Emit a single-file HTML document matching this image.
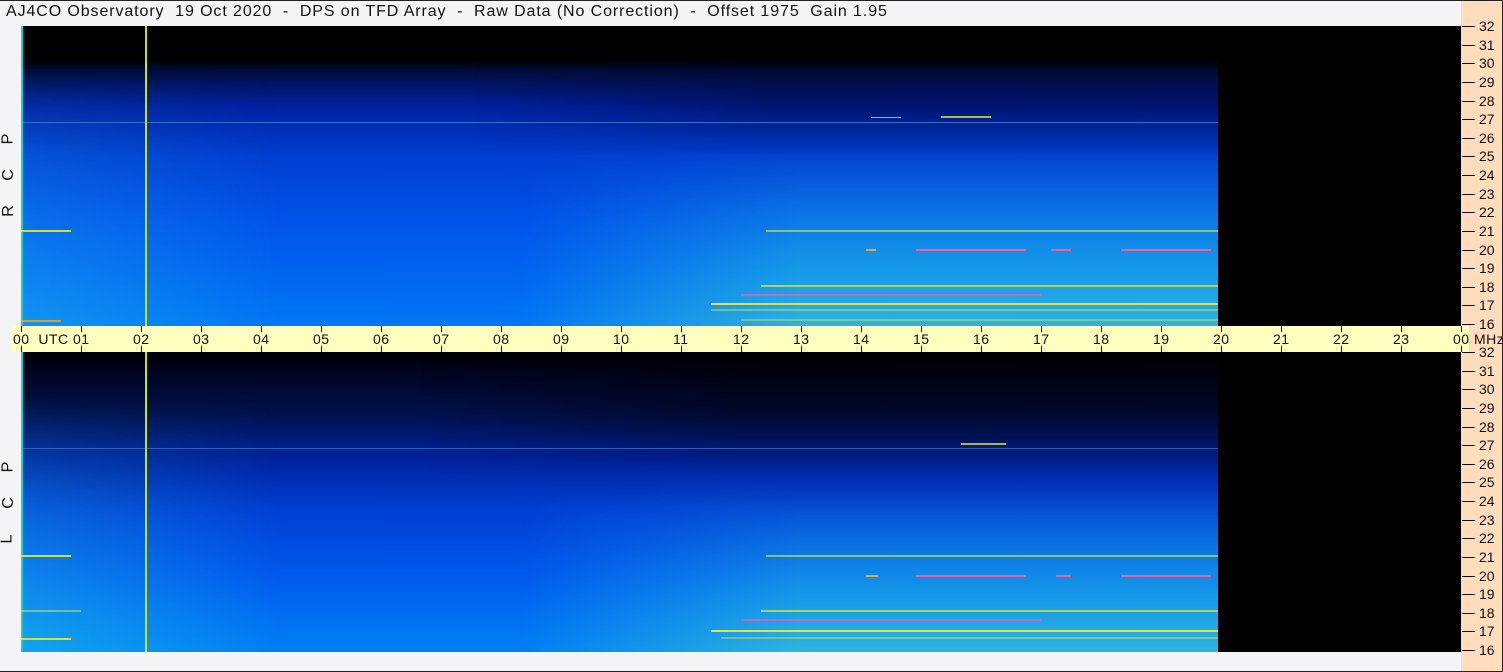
<!DOCTYPE html>
<html><head><meta charset="utf-8"><style>
*{margin:0;padding:0;box-sizing:border-box}
body{width:1503px;height:672px;overflow:hidden;background:#f4f4f6;font-family:"Liberation Sans",sans-serif;position:relative}
.frame{position:absolute;left:0;top:0;width:1503px;height:672px;border-top:1px solid #222;border-right:1px solid #222;border-bottom:1px solid #222;pointer-events:none;z-index:9}
.title{position:absolute;left:6px;top:3px;font-size:16px;color:#111;white-space:pre;letter-spacing:0.9px}
.peach{position:absolute;left:1461px;top:0;width:42px;height:672px;background:#ffdcbc}
.panel{position:absolute;left:21px;width:1440px;height:300px;background:#000;overflow:hidden}
.data{position:absolute;left:0;top:0;width:1197px;height:300px}
.p1 .data{background:linear-gradient(to bottom,#000 0,#000 34px,#000c38 44px,#0020a0 80px,#003ed0 130px,#0052e8 190px,#0066f0 250px,#0078f4 300px)}
.p2 .data{background:linear-gradient(to bottom,#000 0,#010420 20px,#00104a 60px,#0024a0 110px,#0040d4 160px,#0058ec 220px,#0072f2 270px,#0080f4 300px)}
.ov{position:absolute}
.fade{-webkit-mask:linear-gradient(to right,transparent,#000 40%);mask:linear-gradient(to right,transparent,#000 40%)}
.hl{position:absolute;height:2px}
.ticksR{position:absolute;left:1461px;width:42px}
.tk{position:absolute;left:1px;width:13px;height:1px;background:#111}
.tl{position:absolute;left:18px;font-size:14px;color:#111;line-height:14px}
.taxis{position:absolute;left:12px;top:326px;width:1457px;height:26px;background:#ffffc0}
.tt{position:absolute;width:1px;height:6px;background:#111}
.tx{position:absolute;top:5px;font-size:14px;color:#111;white-space:pre;letter-spacing:0.5px}
.side{position:absolute;left:3px;font-size:16px;color:#111;transform:rotate(-90deg);transform-origin:center}
</style></head><body>
<div class="title">AJ4CO Observatory  19 Oct 2020  -  DPS on TFD Array  -  Raw Data (No Correction)  -  Offset 1975  Gain 1.95</div>
<div class="peach"></div>

<div class="panel p1" style="top:26px">
 <div class="data"></div>
 <div class="ov" style="left:0;top:40px;width:260px;height:260px;background:linear-gradient(to bottom,rgba(0,0,0,0),rgba(30,170,240,.55));-webkit-mask:linear-gradient(to right,#000,transparent);mask:linear-gradient(to right,#000,transparent)"></div>
 <div class="ov fade" style="left:450px;top:0;width:747px;height:130px;background:linear-gradient(to bottom,rgba(0,0,0,0),rgba(0,0,20,.35) 60%,rgba(0,0,0,0))"></div>
 <div class="ov fade" style="left:500px;top:120px;width:697px;height:180px;background:linear-gradient(to bottom,rgba(40,190,230,0),rgba(40,200,225,.55) 70%,rgba(70,210,210,.65))"></div>
 <div class="ov" style="left:0;top:96px;width:1197px;height:1px;background:#2a70d0"></div>
 <div class="ov" style="left:920px;top:90px;width:50px;height:2px;background:#d8e040;opacity:.8"></div>
 <div class="ov" style="left:850px;top:91px;width:30px;height:1px;background:#60c0f0"></div>
 <div class="ov" style="left:1;top:0;width:2px;height:300px;background:#10d0e0"></div>
 <div class="ov" style="left:124px;top:0;width:2px;height:300px;background:#c8e020"></div>
 <div class="hl" style="left:0;top:204px;width:50px;background:#d0e030"></div>
 <div class="hl" style="left:745px;top:204px;width:452px;background:#b8e050;opacity:.7"></div>
 <div class="hl" style="left:845px;top:223px;width:10px;background:#f0a040"></div>
 <div class="hl" style="left:895px;top:223px;width:110px;background:#f060a0"></div>
 <div class="hl" style="left:1030px;top:223px;width:20px;background:#f060a0"></div>
 <div class="hl" style="left:1100px;top:223px;width:90px;background:#f060a0"></div>
 <div class="hl" style="left:740px;top:259px;width:457px;background:#d8e040;opacity:.8"></div>
 <div class="hl" style="left:720px;top:268px;width:300px;background:#e060c0;opacity:.8"></div>
 <div class="hl" style="left:690px;top:277px;width:507px;background:#e8e040"></div>
 <div class="hl" style="left:690px;top:283px;width:507px;background:#c8e060;opacity:.5"></div>
 <div class="hl" style="left:720px;top:293px;width:477px;background:#d0e050;opacity:.5"></div>
 <div class="hl" style="left:0;top:294px;width:40px;background:#d8a030"></div>
</div>

<div class="panel p2" style="top:352px">
 <div class="data"></div>
 <div class="ov" style="left:0;top:40px;width:260px;height:260px;background:linear-gradient(to bottom,rgba(0,0,0,0),rgba(30,190,235,.6));-webkit-mask:linear-gradient(to right,#000,transparent);mask:linear-gradient(to right,#000,transparent)"></div>
 <div class="ov fade" style="left:400px;top:0;width:797px;height:125px;background:linear-gradient(to bottom,rgba(0,0,0,.6),rgba(0,0,10,.45) 50%,rgba(0,0,0,0))"></div>
 <div class="ov fade" style="left:500px;top:130px;width:697px;height:170px;background:linear-gradient(to bottom,rgba(40,190,230,0),rgba(40,200,225,.55) 70%,rgba(70,210,210,.65))"></div>
 <div class="ov" style="left:0;top:96px;width:1197px;height:1px;background:#2a60c0"></div>
 <div class="ov" style="left:940px;top:91px;width:45px;height:2px;background:#d8e040;opacity:.8"></div>
 <div class="ov" style="left:1;top:0;width:2px;height:300px;background:#10d0e0"></div>
 <div class="ov" style="left:124px;top:0;width:2px;height:300px;background:#c8e020"></div>
 <div class="hl" style="left:0;top:203px;width:50px;background:#d0e030"></div>
 <div class="hl" style="left:745px;top:203px;width:452px;background:#b8e050;opacity:.7"></div>
 <div class="hl" style="left:895px;top:223px;width:110px;background:#f060a0"></div>
 <div class="hl" style="left:1035px;top:223px;width:15px;background:#f060a0"></div>
 <div class="hl" style="left:1100px;top:223px;width:90px;background:#f060a0"></div>
 <div class="hl" style="left:845px;top:223px;width:12px;background:#f0a040"></div>
 <div class="hl" style="left:740px;top:258px;width:457px;background:#d8e040;opacity:.8"></div>
 <div class="hl" style="left:720px;top:267px;width:300px;background:#e060c0;opacity:.8"></div>
 <div class="hl" style="left:690px;top:278px;width:507px;background:#e8e040"></div>
 <div class="hl" style="left:700px;top:285px;width:497px;background:#c8e060;opacity:.5"></div>
 <div class="hl" style="left:0;top:286px;width:50px;background:#d8e030"></div>
 <div class="hl" style="left:0;top:258px;width:60px;background:#b8e060;opacity:.6"></div>
</div>

<div class="side" style="top:130px">P</div>
<div class="side" style="top:166px">C</div>
<div class="side" style="top:202px">R</div>
<div class="side" style="top:458px">P</div>
<div class="side" style="top:494px">C</div>
<div class="side" style="top:530px">L</div>

<div class="taxis" id="ta"></div>
<div class="ticksR" id="tr" style="top:0;height:672px"></div>
<script>
var ta=document.getElementById('ta'),h='';
for(var i=0;i<=24;i++){var x=21+60*i-12;
 h+='<div class="tt" style="left:'+x+'px;top:0"></div><div class="tt" style="left:'+x+'px;top:20px"></div>';
 var lab=(i%24<10?'0':'')+(i%24);
 h+='<div class="tx" style="left:'+(x-8)+'px">'+lab+(i==0?'  UTC':'')+(i==24?' MHz':'')+'</div>';}
ta.innerHTML=h;
var tr=document.getElementById('tr'),g='';
[[26,324],[352,650]].forEach(function(p){for(var n=32;n>=16;n--){var y=p[0]+(32-n)*(p[1]-p[0])/16;
 g+='<div class="tk" style="top:'+Math.round(y)+'px"></div><div class="tl" style="top:'+Math.round(y-7)+'px">'+n+'</div>';}});
tr.innerHTML=g;
</script>
<div class="frame"></div>
</body></html>
